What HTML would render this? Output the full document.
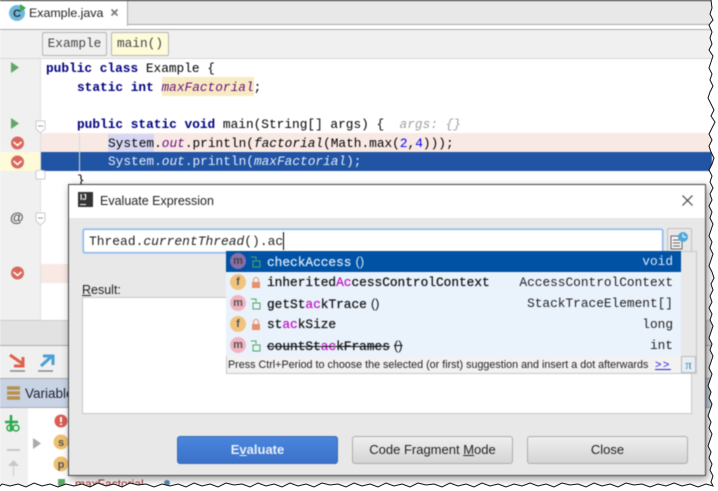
<!DOCTYPE html>
<html><head><meta charset="utf-8">
<style>
html,body{margin:0;padding:0;background:#fff;}
#o{position:relative;width:718px;height:491px;overflow:hidden;background:#fff;}
#p{position:absolute;left:0;top:0;width:718px;height:491px;overflow:hidden;background:#fff;font-family:"Liberation Sans",sans-serif;filter:blur(.4px);}
.a{position:absolute;}
.m{position:absolute;font:12.8px/19px "Liberation Mono",monospace;white-space:pre;color:#000;}
.k{color:#000080;font-weight:bold;}
.i{font-style:italic;}
.f{color:#660e7a;font-style:italic;}
.u{position:absolute;font-size:12.5px;line-height:16px;white-space:pre;color:#222;}
.row{position:absolute;left:226px;width:455px;height:21px;}
.row .n{position:absolute;left:41px;top:1px;font:12.8px/19px "Liberation Mono",monospace;white-space:pre;color:#111;-webkit-text-stroke:.25px #111;}
.row .t{position:absolute;right:8px;top:1px;font:12.8px/19px "Liberation Mono",monospace;white-space:pre;color:#222;}
.row b{font-weight:normal;color:#c018c0;-webkit-text-stroke:.25px #c018c0;}
.row .q{font:13px/19px "Liberation Sans",sans-serif;margin-left:4px;-webkit-text-stroke:0;}
.c{position:absolute;left:4px;top:2px;width:16px;height:16px;border-radius:8px;text-align:center;font:bold 11px/16px "Liberation Sans",sans-serif;color:#555;}
.btn{position:absolute;top:436px;height:26px;border:1px solid #adadad;border-radius:3px;background:linear-gradient(#efefef,#d4d4d4);text-align:center;font-size:13px;line-height:26px;color:#222;}
</style></head><body>
<div id="o">
<div id="p">
<!-- tab bar -->
<div class="a" style="left:0;top:0;width:712px;height:25px;background:#e8e8e8;border-top:1px solid #222;box-sizing:border-box;border-bottom:1px solid #aaa;"></div>
<div class="a" style="left:0;top:1px;width:128px;height:25px;background:#fff;border-right:1px solid #aaa;box-sizing:border-box;"></div>
<div class="a" style="left:0;top:29px;width:712px;height:30px;background:#f0f0f0;border-top:1px solid #aaa;border-bottom:1px solid #d8d8d8;box-sizing:border-box;"></div>
<svg class="a" style="left:8px;top:3px" width="20" height="20"><circle cx="9" cy="10" r="8" fill="#6fb8dc"/><text x="9" y="14" text-anchor="middle" font-family="Liberation Sans" font-size="11" font-weight="bold" fill="#333">C</text><path d="M12 1l6 4-6 4z" fill="#3fa34d"/></svg>
<div class="u" style="left:29px;top:5px;font-size:12.4px;">Example.java</div>
<svg class="a" style="left:110px;top:8px" width="10" height="10"><path d="M1.5 1.5l6 6M7.5 1.5l-6 6" stroke="#777" stroke-width="1.6"/></svg>
<!-- breadcrumbs -->
<div class="m" style="left:42px;top:32px;width:63px;height:22px;line-height:22px;text-align:center;border:1px solid #b4b4b4;border-radius:2px;background:#f0f0f0;color:#444;">Example</div>
<div class="m" style="left:111px;top:32px;width:56px;height:22px;line-height:22px;text-align:center;border:1px solid #b4b4b4;border-radius:2px;background:#fdfbd8;color:#444;">main()</div>
<!-- gutter and editor -->
<div class="a" style="left:0;top:59px;width:40px;height:262px;background:#f0f0f0;border-right:1px solid #e0e0e0;"></div>
<div class="a" style="left:41px;top:133px;width:671px;height:19px;background:#f8e9e4;"></div>
<div class="a" style="left:41px;top:152px;width:671px;height:19px;background:#2154a4;"></div>
<div class="a" style="left:0;top:152px;width:40px;height:19px;background:#fdfbd8;"></div>
<div class="a" style="left:41px;top:264px;width:30px;height:19px;background:#f8e9e4;"></div>
<div class="a" style="left:108px;top:134px;width:46px;height:18px;background:#d7d7f4;"></div>
<div class="a" style="left:162px;top:77px;width:92px;height:19px;background:#f7ebc4;"></div>
<div class="a" style="left:79px;top:133px;width:1px;height:38px;background:#d8d8d8;"></div>
<svg class="a" style="left:0;top:55px" width="60" height="240">
<path d="M11 7l8 5.500-8 5.500z" fill="#62a668"/><path d="M11 63l8 5.500-8 5.500z" fill="#62a668"/>
<path d="M36 66h9v8l-4.500 4-4.500-4z" fill="#fff" stroke="#ccc"/><path d="M38 71h5" stroke="#999"/>
<circle cx="17.500" cy="88" r="6.500" fill="#d9685c"/><path d="M13.500 87l4 3.500 4-3.500" stroke="#fff" fill="none" stroke-width="1.500"/>
<circle cx="17.500" cy="107" r="6.500" fill="#d9685c"/><path d="M13.500 106l4 3.500 4-3.500" stroke="#fff" fill="none" stroke-width="1.500"/>
<circle cx="17.500" cy="218" r="6.500" fill="#d9685c"/><path d="M13.500 217l4 3.500 4-3.500" stroke="#fff" fill="none" stroke-width="1.500"/>
<path d="M36 119v5h9v-8l-4.500 -1-4.500 1z" fill="#fff" stroke="#ccc"/>
<path d="M36 158h9v8l-4.500 4-4.500-4z" fill="#fff" stroke="#ccc"/><path d="M38 163h5" stroke="#999"/>
</svg>
<div class="a" style="left:10px;top:208px;font:bold 14px/18px 'Liberation Sans',sans-serif;color:#555;">@</div>
<div class="m" style="left:46px;top:59px;"><span class="k">public class</span> Example {</div>
<div class="m" style="left:77px;top:78px;"><span class="k">static int</span> <span class="f">maxFactorial</span>;</div>
<div class="m" style="left:77px;top:115px;"><span class="k">public static void</span> main(String[] args) {  <span class="i" style="color:#a0a0a0">args: {}</span></div>
<div class="m" style="left:108px;top:134px;">System.<span class="f">out</span>.println(<span class="i">factorial</span>(Math.max(<span style="color:#00f">2</span>,<span style="color:#00f">4</span>)));</div>
<div class="m" style="left:108px;top:152px;color:#e6eefa;">System.<span class="i">out</span>.println(<span class="i">maxFactorial</span>);</div>
<div class="m" style="left:77px;top:171px;">}</div>
<!-- lower background -->
<div class="a" style="left:0;top:320px;width:712px;height:26px;background:#e2e2e2;border-top:1px solid #ccc;border-bottom:1px solid #aaa;box-sizing:border-box;"></div>
<div class="a" style="left:0;top:346px;width:712px;height:33px;background:#f0f0f0;border-bottom:1px solid #aaa;box-sizing:border-box;"></div>
<div class="a" style="left:0;top:379px;width:712px;height:29px;background:#c8d4e4;border-bottom:1px solid #aab;box-sizing:border-box;"></div>
<div class="a" style="left:0;top:408px;width:28px;height:80px;background:#f0f0f0;"></div>
<svg class="a" style="left:0;top:350px" width="68" height="130">
<path d="M10 5l13 9M23 7v9h-9" stroke="#e0604c" stroke-width="3" fill="none"/><path d="M10 21h15" stroke="#888" stroke-width="1.500"/>
<path d="M41 16l11-10M43 6h10v9" stroke="#4aa0d4" stroke-width="3" fill="none"/><path d="M38 21h15" stroke="#888" stroke-width="1.500"/>
<path d="M7 38h13M7 43h13M7 48h13" stroke="#b89050" stroke-width="3.500"/>
<path d="M11 65v15M5 72h13" stroke="#2aa84a" stroke-width="2.500"/><circle cx="10" cy="78" r="3" fill="none" stroke="#2aa84a" stroke-width="1.500"/><circle cx="16" cy="78" r="3" fill="none" stroke="#2aa84a" stroke-width="1.500"/>
<path d="M7 100h13" stroke="#c8c8c8" stroke-width="2"/>
<path d="M33 88l8 5.500-8 5.500z" fill="#aaa"/>
<path d="M13 126v-10h-5l5.500-6 5.500 6h-5v10z" fill="#c8c8c8"/>
<circle cx="61" cy="71" r="6.500" fill="#dc5c54"/><path d="M61 67v5M61 73.500v1.500" stroke="#fff" stroke-width="2"/>
<circle cx="61" cy="92" r="7.500" fill="#f0c070"/><circle cx="61" cy="114" r="7.500" fill="#f0c070"/>
<text x="61" y="96" text-anchor="middle" font-size="11" font-weight="bold" font-family="Liberation Sans" fill="#555">s</text>
<text x="61" y="118" text-anchor="middle" font-size="11" font-weight="bold" font-family="Liberation Sans" fill="#555">p</text>
</svg>
<div class="u" style="left:25px;top:386px;font-size:13.500px;color:#223;">Variables</div>
<div class="a" style="left:58px;top:479px;width:7px;height:7px;background:#5aa868;"></div>
<div class="a" style="left:75px;top:478px;font:12px/12px 'Liberation Sans',sans-serif;color:#a02020;white-space:pre;">maxFactorial</div>
<div class="a" style="left:164px;top:480px;width:6px;height:6px;border-radius:3px;background:#5a8ab8;"></div>
<!-- dialog -->
<div class="a" style="left:68px;top:184px;width:638px;height:292px;box-sizing:border-box;border:1px solid #444;background:#e8e8e8;box-shadow:2px 3px 8px rgba(0,0,0,.4);"></div>
<div class="a" style="left:69px;top:185px;width:636px;height:33px;background:#fff;"></div>
<div class="a" style="left:78px;top:192px;width:15px;height:15px;background:#333;"></div>
<div class="a" style="left:80px;top:193px;font:bold 8px/9px 'Liberation Sans',sans-serif;color:#fff;">IJ</div>
<div class="a" style="left:80px;top:204px;width:6px;height:1px;background:#fff;"></div>
<div class="u" style="left:100px;top:193px;">Evaluate Expression</div>
<svg class="a" style="left:681px;top:194px" width="14" height="14"><path d="M1.500 1.500l10 10M11.500 1.500l-10 10" stroke="#444" stroke-width="1.200"/></svg>
<!-- input -->
<div class="a" style="left:83px;top:229px;width:580px;height:24px;box-sizing:border-box;background:#fff;border:1px solid #7fb0e6;box-shadow:0 0 0 1px #b8d4f2;border-radius:2px;"></div>
<div class="m" style="left:89px;top:232px;color:#222;font-size:12.950px;">Thread.<span class="i">currentThread</span>().ac</div>
<div class="a" style="left:283px;top:232px;width:1px;height:18px;background:#000;"></div>
<div class="a" style="left:667px;top:228px;width:25px;height:24px;box-sizing:border-box;border:1px solid #c0c0c0;border-radius:2px;background:#e8e8e8;"></div>
<svg class="a" style="left:670px;top:231px" width="20" height="20"><rect x="1" y="5" width="11" height="13" fill="#f4f4f4" stroke="#666"/><path d="M3 9h7M3 12h7M3 15h7" stroke="#666"/><circle cx="13" cy="6" r="5" fill="#4fa8dc"/><path d="M13 3v3h3" stroke="#fff" fill="none"/></svg>
<!-- result -->
<div class="u" style="left:82px;top:282px;text-decoration:none;"><span style="text-decoration:underline">R</span>esult:</div>
<div class="a" style="left:82px;top:297px;width:610px;height:117px;box-sizing:border-box;background:#fff;border:1px solid #c8c8c8;"></div>
<!-- popup -->
<div class="a" style="left:226px;top:251px;width:471px;height:123px;box-sizing:border-box;background:#e8e8e8;border:1px solid #c8c8c8;"></div>
<div class="a" style="left:226px;top:251px;width:455px;height:105px;background:#eaf2fc;"></div>
<div class="row" style="top:251px;background:#0052a4;">
<div class="c" style="background:#8a6ea8;color:#444;">m</div>
<svg class="a" style="left:24px;top:5px" width="12" height="12"><path d="M1 1h5v3" stroke="#4aa860" fill="none"/><rect x="3" y="5" width="7" height="6" fill="none" stroke="#4aa860"/></svg>
<div class="n" style="color:#d8e8f8;-webkit-text-stroke:.25px #d8e8f8;">checkAccess<span class="q">()</span></div><div class="t" style="color:#d8e8f8;">void</div></div>
<div class="row" style="top:272px;">
<div class="c" style="background:#f0c47c;">f</div>
<svg class="a" style="left:24px;top:5px" width="12" height="12"><path d="M3.500 5V3a2.500 2.500 0 0 1 5 0v2" stroke="#e8906c" fill="none"/><rect x="2" y="5" width="8" height="6" fill="#e8906c"/></svg>
<div class="n">inherited<b>Ac</b>cessControlContext</div><div class="t">AccessControlContext</div></div>
<div class="row" style="top:293px;">
<div class="c" style="background:#f2b4c0;">m</div>
<svg class="a" style="left:24px;top:5px" width="12" height="12"><path d="M1 1h5v3" stroke="#4aa860" fill="none"/><rect x="3" y="5" width="7" height="6" fill="none" stroke="#4aa860"/></svg>
<div class="n">getSt<b>ac</b>kTrace<span class="q">()</span></div><div class="t">StackTraceElement[]</div></div>
<div class="row" style="top:314px;">
<div class="c" style="background:#f0c47c;">f</div>
<svg class="a" style="left:24px;top:5px" width="12" height="12"><path d="M3.500 5V3a2.500 2.500 0 0 1 5 0v2" stroke="#e8906c" fill="none"/><rect x="2" y="5" width="8" height="6" fill="#e8906c"/></svg>
<div class="n">st<b>ac</b>kSize</div><div class="t">long</div></div>
<div class="row" style="top:335px;">
<div class="c" style="background:#f2b4c0;">m</div>
<svg class="a" style="left:24px;top:5px" width="12" height="12"><path d="M1 1h5v3" stroke="#4aa860" fill="none"/><rect x="3" y="5" width="7" height="6" fill="none" stroke="#4aa860"/></svg>
<div class="n" style="text-decoration:line-through;">countSt<b>ac</b>kFrames<span class="q">()</span></div><div class="t">int</div></div>
<div class="a" style="left:227px;top:356px;width:454px;height:17px;background:#f2f2f2;"></div>
<div class="u" style="left:228px;top:357px;font-size:10.750px;">Press Ctrl+Period to choose the selected (or first) suggestion and insert a dot afterwards</div>
<div class="u" style="left:655px;top:357px;font-size:11px;letter-spacing:1.500px;color:#2222dd;text-decoration:underline;">&gt;&gt;</div>
<div class="a" style="left:681px;top:356px;width:15px;height:17px;box-sizing:border-box;border:1px solid #bbb;background:#e8eef4;color:#3a7fb0;text-align:center;font:13px/15px 'Liberation Serif',serif;">π</div>
<!-- buttons -->
<div class="btn" style="left:177px;width:159px;background:linear-gradient(#4a86dc,#3a72c8);border-color:#3a6cb4;color:#e8f0fc;font-weight:bold;">E<span style="text-decoration:underline">v</span>aluate</div>
<div class="btn" style="left:352px;width:159px;">Code Fragment <span style="text-decoration:underline">M</span>ode</div>
<div class="btn" style="left:527px;width:159px;">Close</div>
</div>
<!-- torn edge: outside the blur so it stays crisp -->
<svg class="a" style="left:0;top:0" width="718" height="491">
<path d="M711 0L712 8L710 14L713 20L709 25L712 32L710 38L712 44L709 50L713 56L711 62L709 68L712 74L710 80L713 86L710 92L708 98L711 104L714 110L711 116L715 122L712 128L709 134L712 140L709 146L711 152L714 158L712 164L709 170L712 176L710 182L713 188L710 194L712 200L709 206L712 212L710 218L713 224L711 230L709 236L712 242L710 248L713 254L711 260L709 266L712 272L714 278L711 284L713 290L710 296L712 302L709 308L712 314L710 320L713 326L711 332L709 338L712 344L710 350L713 356L711 362L709 368L712 374L710 380L708 386L711 392L709 398L712 404L710 410L708 416L711 422L709 428L712 434L710 440L708 446L711 452L709 458L712 464L710 470L713 476L711 482L713 486L706 484L698 487L690 484L682 486L674 483L666 486L658 484L650 487L642 484L634 485L626 483L618 487L610 484L602 486L594 483L586 487L578 484L570 485L562 483L554 487L546 484L538 486L530 483L522 486L514 484L506 487L498 484L490 486L482 483L474 487L466 484L458 486L450 483L442 487L434 484L426 485L418 483L410 487L402 484L394 486L386 483L378 487L370 484L362 486L354 483L346 487L338 484L330 485L322 483L314 487L306 484L298 486L290 483L282 487L274 484L266 486L258 483L250 487L242 484L234 485L226 483L218 487L210 484L202 486L194 483L186 487L178 484L170 486L162 484L154 487L146 484L138 485L130 483L122 487L114 484L106 486L98 483L90 487L82 484L74 486L66 484L58 487L50 484L42 486L34 483L26 487L18 484L10 486L2 484L0 486L0 491L718 491L718 0Z" fill="#fff" stroke="none"/>
<path d="M711 0L712 8L710 14L713 20L709 25L712 32L710 38L712 44L709 50L713 56L711 62L709 68L712 74L710 80L713 86L710 92L708 98L711 104L714 110L711 116L715 122L712 128L709 134L712 140L709 146L711 152L714 158L712 164L709 170L712 176L710 182L713 188L710 194L712 200L709 206L712 212L710 218L713 224L711 230L709 236L712 242L710 248L713 254L711 260L709 266L712 272L714 278L711 284L713 290L710 296L712 302L709 308L712 314L710 320L713 326L711 332L709 338L712 344L710 350L713 356L711 362L709 368L712 374L710 380L708 386L711 392L709 398L712 404L710 410L708 416L711 422L709 428L712 434L710 440L708 446L711 452L709 458L712 464L710 470L713 476L711 482L713 486L706 484L698 487L690 484L682 486L674 483L666 486L658 484L650 487L642 484L634 485L626 483L618 487L610 484L602 486L594 483L586 487L578 484L570 485L562 483L554 487L546 484L538 486L530 483L522 486L514 484L506 487L498 484L490 486L482 483L474 487L466 484L458 486L450 483L442 487L434 484L426 485L418 483L410 487L402 484L394 486L386 483L378 487L370 484L362 486L354 483L346 487L338 484L330 485L322 483L314 487L306 484L298 486L290 483L282 487L274 484L266 486L258 483L250 487L242 484L234 485L226 483L218 487L210 484L202 486L194 483L186 487L178 484L170 486L162 484L154 487L146 484L138 485L130 483L122 487L114 484L106 486L98 483L90 487L82 484L74 486L66 484L58 487L50 484L42 486L34 483L26 487L18 484L10 486L2 484L0 486" fill="none" stroke="#111" stroke-width="1"/>
</svg>
</div>
</body></html>
